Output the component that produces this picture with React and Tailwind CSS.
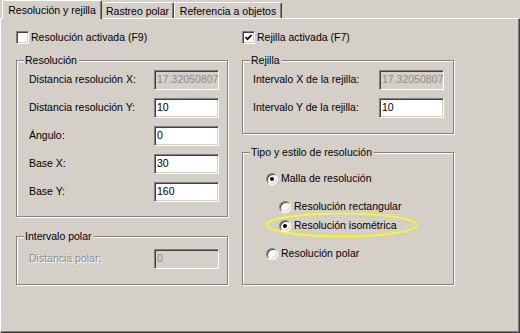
import React from "react";

const sunken =
  "border-t border-l border-t-[#808080] border-l-[#808080] border-b border-r border-b-white border-r-white shadow-[inset_1px_1px_0_#404040,inset_-1px_-1px_0_#d4d0c8]";

const Input = ({ value, disabled }) => (
  <div
    className={`h-[20px] w-[65px] flex items-center pl-[2px] ${sunken} ${
      disabled ? "bg-[#d4d0c8] text-[#8a8a8a]" : "bg-white text-black"
    }`}
  >
    {value}
  </div>
);

const Checkbox = ({ checked, label }) => (
  <div className="flex items-center h-[13px] gap-[2px]">
    <div className={`w-[13px] h-[13px] bg-white flex items-center justify-center ${sunken}`}>
      {checked && (
        <svg width="9" height="9" viewBox="0 0 9 9">
          <polyline points="1.5,4 3.5,6.2 7.5,2" fill="none" stroke="#000" strokeWidth="1.7" />
        </svg>
      )}
    </div>
    <span>{label}</span>
  </div>
);

const Radio = ({ checked, label }) => (
  <div className="flex items-center h-[13px] gap-[3px]">
    <div className="w-[12px] h-[12px] rounded-full bg-white flex items-center justify-center border border-t-[#808080] border-l-[#808080] border-b-white border-r-white shadow-[inset_1px_1px_0_#404040,inset_-1px_-1px_0_#d4d0c8]">
      {checked && <div className="w-[4px] h-[4px] rounded-full bg-black" />}
    </div>
    <span>{label}</span>
  </div>
);

const Group = ({ title, className, children }) => (
  <fieldset
    className={`w-[212px] border border-[#808080] shadow-[1px_1px_0_#fff,inset_1px_1px_0_#fff] ${className}`}
  >
    <legend className="ml-[7px] pl-[1px] pr-[2px] leading-[13px] bg-[#d4d0c8]">{title}</legend>
    {children}
  </fieldset>
);

// labelOff: the label itself is greyed (whole row disabled)
const Row = ({ label, value, disabled, labelOff }) => (
  <div className="flex items-center justify-between h-[20px]">
    <span className={labelOff ? "text-[#8a8a8a] [text-shadow:1px_1px_0_#fff]" : ""}>{label}</span>
    <Input value={value} disabled={disabled} />
  </div>
);

const resolucion = [
  { label: "Distancia resolución X:", value: "17.32050807", disabled: true },
  { label: "Distancia resolución Y:", value: "10" },
  { label: "Ángulo:", value: "0" },
  { label: "Base X:", value: "30" },
  { label: "Base Y:", value: "160" },
];

export default function App() {
  return (
    <div className="w-[520px] h-[333px] bg-[#d4d0c8] overflow-hidden text-[10.5px] text-black font-['Liberation_Sans',Arial,sans-serif]">
      {/* tabs */}
      <div className="flex items-end h-[18px] pl-[2px]">
        <div className="relative z-10 h-[19px] w-[100px] -mb-[1px] bg-[#d4d0c8] border-l border-t border-r border-l-white border-t-white border-r-[#404040] rounded-t-[2px] shadow-[inset_-1px_0_0_#808080] flex items-start justify-center pt-[2px]">
          Resolución y rejilla
        </div>
        <div className="h-[16px] w-[72px] border-t border-r border-t-white border-r-[#404040] rounded-t-[2px] shadow-[inset_-1px_0_0_#808080] flex items-start justify-center pt-[1px]">
          Rastreo polar
        </div>
        <div className="h-[16px] w-[108px] border-l border-t border-r border-l-white border-t-white border-r-[#404040] rounded-t-[2px] shadow-[inset_-1px_0_0_#808080] flex items-start justify-center pt-[1px]">
          Referencia a objetos
        </div>
      </div>

      {/* panel */}
      <div className="h-[315px] w-[520px] border-t border-l border-t-white border-l-white border-r border-b border-r-[#404040] border-b-[#404040] shadow-[inset_-1px_-1px_0_#808080] flex pl-[15px] gap-[14px]">
        {/* left column */}
        <div className="flex flex-col pt-[12px]">
          <Checkbox label="Resolución activada (F9)" />
          <Group title="Resolución" className="mt-[10px]">
            <div className="flex flex-col gap-[8px] pt-[3px] pb-[14px] pl-[12px] pr-[8px]">
              {resolucion.map((r) => (
                <Row key={r.label} {...r} />
              ))}
            </div>
          </Group>
          <Group title="Intervalo polar" className="mt-[13px]">
            <div className="pt-[6px] pb-[15px] pl-[12px] pr-[8px]">
              <Row label="Distancia polar:" value="0" disabled labelOff />
            </div>
          </Group>
        </div>

        {/* right column */}
        <div className="flex flex-col pt-[12px]">
          <Checkbox checked label="Rejilla activada (F7)" />
          <Group title="Rejilla" className="mt-[10px]">
            <div className="flex flex-col gap-[8px] pt-[3px] pb-[15px] pl-[10px] pr-[9px]">
              <Row label="Intervalo X de la rejilla:" value="17.32050807" disabled />
              <Row label="Intervalo Y de la rejilla:" value="10" />
            </div>
          </Group>
          <Group title="Tipo y estilo de resolución" className="mt-[12px]">
            <div className="flex flex-col pt-[13px] pb-[24px] pl-[23px]">
              <Radio checked label="Malla de resolución" />
              <div className="ml-[13px] mt-[15px]">
                <Radio label="Resolución rectangular" />
              </div>
              <div className="relative ml-[13px] mt-[6px]">
                <Radio checked label="Resolución isométrica" />
                <svg
                  className="absolute left-[-14px] top-[-7px]"
                  width="153"
                  height="26"
                  viewBox="0 0 153 26"
                >
                  <ellipse cx="76.5" cy="13" rx="75" ry="11.5" fill="none" stroke="#ffff00" strokeWidth="1.6" />
                </svg>
              </div>
              <div className="mt-[15px]">
                <Radio label="Resolución polar" />
              </div>
            </div>
          </Group>
        </div>
      </div>
    </div>
  );
}
